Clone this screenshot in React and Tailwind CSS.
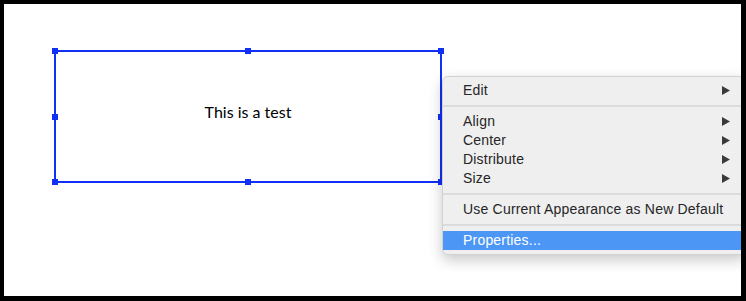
import React from "react";

const menuItems = [
  { type: "item", label: "Edit", sub: true },
  { type: "sep" },
  { type: "item", label: "Align", sub: true },
  { type: "item", label: "Center", sub: true },
  { type: "item", label: "Distribute", sub: true },
  { type: "item", label: "Size", sub: true },
  { type: "sep" },
  { type: "item", label: "Use Current Appearance as New Default" },
  { type: "sep" },
  { type: "item", label: "Properties...", active: true },
];

const SubArrow = () => (
  <svg width="8" height="9" viewBox="0 0 8 9" className="flex-shrink-0">
    <polygon points="0,0 8,4.5 0,9" fill="#3a3a3a" />
  </svg>
);

// resize handles sitting on the selection outline
const Handle = ({ className }) => (
  <div className={`absolute w-[6px] h-[6px] bg-[#1230f5] ${className}`} />
);

const App = () => {
  return (
    <div className="relative w-[746px] h-[301px] overflow-hidden bg-white border-black border-t-4 border-l-4 border-r-[5px] border-b-[5px]">
      {/* ===== Selected text box ===== */}
      <div className="absolute left-[50px] top-[46px] w-[388px] h-[133px] border-2 border-[#1230f5]">
        <div
          className="flex justify-center pt-[50px] text-[16px] leading-[20px] text-black"
          style={{ fontFamily: "Lato, sans-serif" }}
        >
          This is a test
        </div>
        <Handle className="-left-[4px] -top-[4px]" />
        <Handle className="left-1/2 -ml-[3px] -top-[4px]" />
        <Handle className="-right-[4px] -top-[4px]" />
        <Handle className="-left-[4px] top-1/2 -mt-[3px]" />
        <Handle className="-right-[4px] top-1/2 -mt-[3px]" />
        <Handle className="-left-[4px] -bottom-[4px]" />
        <Handle className="left-1/2 -ml-[3px] -bottom-[4px]" />
        <Handle className="-right-[4px] -bottom-[4px]" />
      </div>

      {/* ===== Context menu ===== */}
      <div
        className="absolute left-[438px] top-[72px] w-[304px] flex flex-col pt-[4px] pb-[4px] bg-[#efefef] border border-[#d2d2d2] rounded-[6px] shadow-[0_5px_14px_rgba(0,0,0,0.22)]"
        style={{ fontFamily: "'Liberation Sans', Arial, sans-serif" }}
      >
        {menuItems.map((item, i) =>
          item.type === "sep" ? (
            <div key={i} className="h-[12px] flex items-center">
              <div className="w-full h-[2px] bg-[#dcdcdc]" />
            </div>
          ) : (
            <div
              key={i}
              className={`flex items-center justify-between h-[19px] pl-[20px] pr-[15px] text-[14px] tracking-[0.2px] ${
                item.active ? "bg-[#4c97f5] text-white" : "text-[#262626]"
              }`}
            >
              <span>{item.label}</span>
              {item.sub && <SubArrow />}
            </div>
          )
        )}
      </div>
    </div>
  );
};

export default App;
